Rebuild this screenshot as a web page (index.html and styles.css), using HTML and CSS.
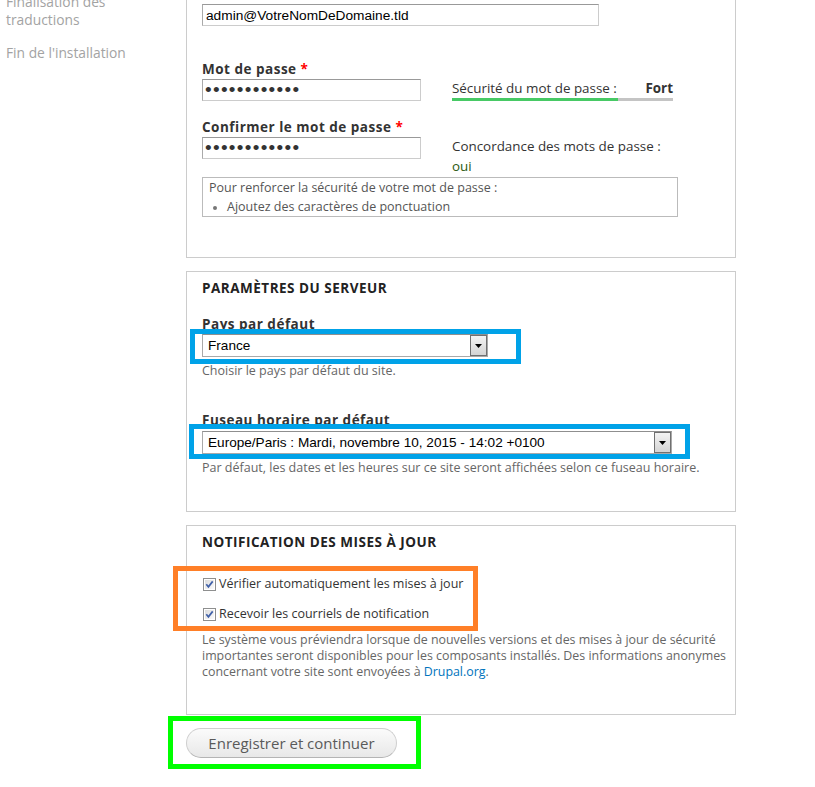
FILE: index.html
```html
<!DOCTYPE html>
<html lang="fr">
<head>
<meta charset="utf-8">
<title>Configurer le site</title>
<link rel="stylesheet" href="styles.css">
</head>
<body>
<div class="page">
  <aside class="sidebar">
    <ol class="steps">
      <li>Finalisation des traductions</li>
      <li>Fin de l'installation</li>
    </ol>
  </aside>

  <main class="main">
    <form class="form">
      <div class="fieldset fs-account">
        <div class="item item-email">
          <label class="label">Adresse électronique <span class="req">*</span></label>
          <input class="text text-email" type="text" value="admin@VotreNomDeDomaine.tld">
        </div>

        <div class="pw-row pw-row-first">
          <div class="item pw-item">
            <label class="label">Mot de passe <span class="req">*</span></label>
            <input class="text text-pw" type="password" value="motdepasse12">
          </div>
          <div class="pw-side pw-side-strength">
            <div class="strength-title"><span>Sécurité du mot de passe :</span><strong class="strength-value">Fort</strong></div>
            <div class="indicator"><div class="indicator-bar" style="width:75%"></div></div>
          </div>
        </div>

        <div class="pw-row pw-row-confirm">
          <div class="item pw-item">
            <label class="label">Confirmer le mot de passe <span class="req">*</span></label>
            <input class="text text-pw" type="password" value="motdepasse12">
          </div>
          <div class="pw-side pw-side-confirm">
            <div>Concordance des mots de passe :</div>
            <div class="ok">oui</div>
          </div>
        </div>

        <div class="pw-help">
          <div>Pour renforcer la sécurité de votre mot de passe :</div>
          <ul class="pw-help-list">
            <li>Ajoutez des caractères de ponctuation</li>
          </ul>
        </div>
      </div>

      <div class="fieldset fs-server">
        <div class="legend">Paramètres du serveur</div>
        <div class="item item-country">
          <label class="label">Pays par défaut</label>
          <div class="select select-country">
            <span class="select-value">France</span>
            <span class="select-arrow"><svg width="7" height="4" viewBox="0 0 7 4"><path d="M0 0h7L3.5 4z" fill="#000"/></svg></span>
          </div>
          <div class="description">Choisir le pays par défaut du site.</div>
        </div>
        <div class="item item-tz">
          <label class="label">Fuseau horaire par défaut</label>
          <div class="select select-tz">
            <span class="select-value">Europe/Paris : Mardi, novembre 10, 2015 - 14:02 +0100</span>
            <span class="select-arrow"><svg width="7" height="4" viewBox="0 0 7 4"><path d="M0 0h7L3.5 4z" fill="#000"/></svg></span>
          </div>
          <div class="description">Par défaut, les dates et les heures sur ce site seront affichées selon ce fuseau horaire.</div>
        </div>
      </div>

      <div class="fieldset fs-update">
        <div class="legend">Notification des mises à jour</div>
        <label class="check check-first">
          <svg class="check-box" width="13" height="13" viewBox="0 0 13 13"><defs><linearGradient id="cg" x1="0" y1="0" x2="1" y2="1"><stop offset="0" stop-color="#dcdcdc"/><stop offset="1" stop-color="#fbfbfb"/></linearGradient></defs><rect x="0.5" y="0.5" width="12" height="12" fill="#fff" stroke="#8e8f8f"/><rect x="2" y="2" width="9" height="9" fill="url(#cg)"/><path d="M3.3 6.3L5.4 8.8L9.7 3.4" fill="none" stroke="#4060a8" stroke-width="1.7"/></svg>
          <span>Vérifier automatiquement les mises à jour</span>
        </label>
        <label class="check check-second">
          <svg class="check-box" width="13" height="13" viewBox="0 0 13 13"><rect x="0.5" y="0.5" width="12" height="12" fill="#fff" stroke="#8e8f8f"/><rect x="2" y="2" width="9" height="9" fill="url(#cg)"/><path d="M3.3 6.3L5.4 8.8L9.7 3.4" fill="none" stroke="#4060a8" stroke-width="1.7"/></svg>
          <span>Recevoir les courriels de notification</span>
        </label>
        <div class="description description-long">Le système vous préviendra lorsque de nouvelles versions et des mises à jour de sécurité importantes seront disponibles pour les composants installés. Des informations anonymes concernant votre site sont envoyées à <a class="link" href="#">Drupal.org</a>.</div>
      </div>

      <div class="actions">
        <button class="button" type="button">Enregistrer et continuer</button>
      </div>
    </form>
  </main>

  <div class="mark mark-country"></div>
  <div class="mark mark-tz"></div>
  <div class="mark mark-updates"></div>
  <div class="mark mark-submit"></div>
</div>
</body>
</html>
```
FILE: styles.css
```css
* { box-sizing: border-box; }

html, body {
  margin: 0;
  background: #fff;
}

body {
  font-family: "Open Sans", "DejaVu Sans", sans-serif;
  font-size: 13.4px;
  line-height: 20px;
  color: #333;
}

.page {
  position: relative;
  display: flex;
  align-items: flex-start;
  height: 787px;
  overflow: hidden;
}

/* Sidebar steps */
.sidebar {
  width: 186px;
  flex: none;
  padding-left: 6px;
  margin-top: -7px;
  font-size: 13.8px;
  color: #a3a3a3;
}

.steps {
  list-style: none;
  margin: 0;
  padding: 0;
  line-height: 18px;
}

.steps li {
  width: 130px;
  margin-bottom: 15px;
}

/* Main column */
.main {
  width: 550px;
  flex: none;
  margin-top: -27px;
}

.form { margin: 0; }

.fieldset {
  border: 1px solid #ccc;
  margin-bottom: 13px;
}

.fs-account { padding: 6px 15px 40px; }
.fs-server  { padding: 6px 15px 34px; }
.fs-update  { padding: 6px 9px 34px 15px; }

.legend {
  font-size: 13.5px;
  font-weight: bold;
  letter-spacing: 0.5px;
  text-transform: uppercase;
  color: #222;
  line-height: 20px;
}

.label {
  display: block;
  font-size: 13.5px;
  font-weight: bold;
  letter-spacing: 0.5px;
  line-height: 20px;
  color: #333;
}

.item-email .label { margin-bottom: 4px; }

.req {
  color: #f00;
}

.text {
  display: block;
  height: 22px;
  margin: 0;
  padding: 2px 3px;
  border: 1px solid #ccc;
  border-top-color: #999;
  border-left-color: #aaa;
  font-family: "Liberation Sans", Arial, sans-serif;
  font-size: 13.7px;
  color: #000;
  background: #fff;
  outline: none;
}

.text-email { width: 397px; }

.text-pw {
  width: 219px;
  padding: 0 2px;
  font-size: 19px;
  letter-spacing: 1.3px;
  color: #333;
}

/* Password rows */
.pw-row {
  display: flex;
  align-items: flex-start;
}

.pw-row-first { margin-top: 33px; }
.pw-row-confirm { margin-top: 16px; }

.pw-item { width: 219px; flex: none; }

.pw-side {
  width: 221px;
  margin-left: 31px;
  flex: none;
}

.pw-side-strength { padding-top: 20px; }
.pw-side-confirm { padding-top: 19px; }

.strength-title {
  display: flex;
  justify-content: space-between;
  line-height: 18px;
}

.strength-value { font-weight: bold; }

.indicator {
  height: 3px;
  margin-top: 1px;
  background: #c4c4c4;
}

.indicator-bar {
  height: 100%;
  background: #47c965;
}

.ok { color: #2a5a10; }

.pw-help {
  width: 476px;
  margin-top: 1px;
  padding: 0 6px;
  border: 1px solid #bbb;
  font-size: 12.5px;
  line-height: 19px;
  color: #555;
}

.pw-help-list {
  margin: 0;
  padding-left: 18px;
}

.pw-help-list li {
  list-style: disc;
}

.pw-help-list li::marker {
  color: #777;
  font-size: 10px;
}

/* Selects */
.item-country { margin-top: 16px; }
.item-tz { margin-top: 30px; }
.item-tz .select { margin-top: 1px; }

.select {
  display: flex;
  align-items: stretch;
  height: 23px;
  border: 1px solid #a9a9a9;
  border-top-color: #8f8f8f;
  background: #fff;
  font-family: "Liberation Sans", Arial, sans-serif;
  font-size: 13.6px;
  color: #000;
}

.select-country { width: 286px; }
.select-tz { width: 470px; }

.select-value {
  flex: 1;
  padding-left: 5px;
  line-height: 22px;
  white-space: nowrap;
  overflow: hidden;
}

.select-arrow {
  width: 17px;
  flex: none;
  display: flex;
  align-items: center;
  justify-content: center;
  border: 1px solid #707070;
  background: linear-gradient(#f3f3f3, #d4d4d4);
}

.description {
  margin-top: 5px;
  font-size: 12.5px;
  line-height: 18px;
  color: #666;
}

/* Checkboxes */
.check {
  display: flex;
  align-items: center;
  font-size: 12.5px;
  line-height: 20px;
  color: #333;
}

.check-first { margin-top: 22px; }
.check-second { margin-top: 10px; }

.check-box {
  flex: none;
  margin-left: 1px;
  margin-right: 3px;
}

.description-long {
  margin-top: 8px;
  font-size: 12.4px;
  line-height: 16px;
}

.link {
  color: #0074bd;
  text-decoration: none;
}

/* Submit */
.actions { margin-top: 13px; }

.button {
  display: block;
  width: 211px;
  height: 30px;
  margin: 0;
  padding: 0;
  border: 1px solid #cfcfcf;
  border-bottom-color: #b4b4b4;
  border-radius: 15px;
  background: linear-gradient(#fbfbfb, #e8e8e8);
  font-family: "Open Sans", "DejaVu Sans", sans-serif;
  font-size: 15px;
  color: #5a5a5a;
  cursor: pointer;
}

/* Annotation frames drawn over the screenshot */
.mark {
  position: absolute;
  border: 5px solid #00a2e8;
  pointer-events: none;
}

.mark-country { left: 190px; top: 329px; width: 331px; height: 35px; }
.mark-tz { left: 189px; top: 424px; width: 501px; height: 35px; }
.mark-updates { left: 173px; top: 566px; width: 305px; height: 65px; border-color: #ff7f27; }
.mark-submit { left: 168px; top: 716px; width: 253px; height: 53px; border-color: #00ff00; }
```
